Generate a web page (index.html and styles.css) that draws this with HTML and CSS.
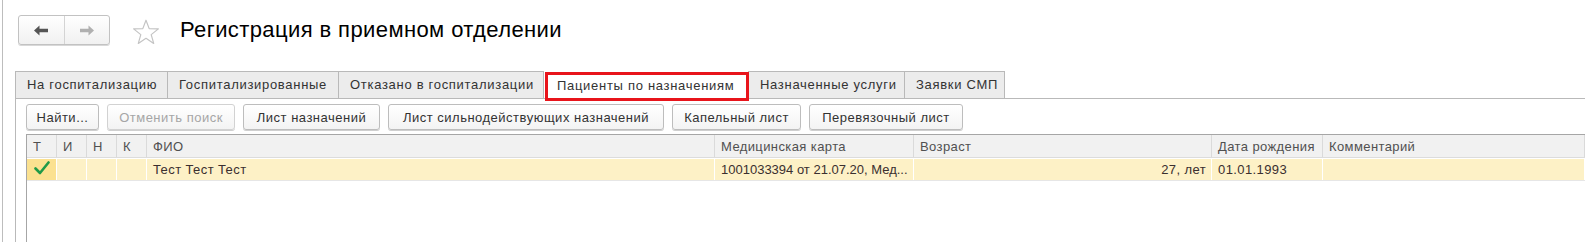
FILE: index.html
```html
<!DOCTYPE html>
<html lang="ru">
<head>
<meta charset="utf-8">
<title>Регистрация в приемном отделении</title>
<link rel="stylesheet" href="styles.css">
</head>
<body>
<div class="window">
  <header class="head">
    <div class="nav">
      <button class="nav-btn back" aria-label="Назад">
        <svg width="14" height="11" viewBox="0 0 14 11"><path d="M0 5.5 L5.5 0.5 L5.5 3.8 L14 3.8 L14 7.2 L5.5 7.2 L5.5 10.5 Z" fill="#555"/></svg>
      </button>
      <button class="nav-btn fwd" aria-label="Вперёд">
        <svg width="14" height="11" viewBox="0 0 14 11"><path d="M14 5.5 L8.5 0.5 L8.5 3.8 L0 3.8 L0 7.2 L8.5 7.2 L8.5 10.5 Z" fill="#b0b0b0"/></svg>
      </button>
    </div>
    <svg class="star" width="28" height="26" viewBox="0 0 28 26"><path d="M14 1.2 L17.2 9.6 L26.4 9.9 L19.2 15.6 L21.7 24.4 L14 19.3 L6.3 24.4 L8.8 15.6 L1.6 9.9 L10.8 9.6 Z" fill="none" stroke="#c4c4c4" stroke-width="1.2" stroke-linejoin="round"/></svg>
    <h1 class="title">Регистрация в приемном отделении</h1>
  </header>

  <section class="tabs">
    <nav class="tabstrip">
      <div class="tab t1">На госпитализацию</div>
      <div class="tab t2">Госпитализированные</div>
      <div class="tab t3">Отказано в госпитализации</div>
      <div class="tab active">Пациенты по назначениям</div>
      <div class="tab t5">Назначенные услуги</div>
      <div class="tab t6">Заявки СМП</div>
    </nav>
    <div class="panel">
      <div class="toolbar">
        <button class="btn b1">Найти...</button>
        <button class="btn b2 disabled">Отменить поиск</button>
        <button class="btn b3">Лист назначений</button>
        <button class="btn b4">Лист сильнодействующих назначений</button>
        <button class="btn b5">Капельный лист</button>
        <button class="btn b6">Перевязочный лист</button>
      </div>
      <div class="grid">
        <div class="row hdr">
          <div class="c">Т</div>
          <div class="c">И</div>
          <div class="c">Н</div>
          <div class="c">К</div>
          <div class="c">ФИО</div>
          <div class="c">Медицинская карта</div>
          <div class="c">Возраст</div>
          <div class="c">Дата рождения</div>
          <div class="c">Комментарий</div>
        </div>
        <div class="row data">
          <div class="c chk"><svg width="16" height="14" viewBox="0 0 16 14"><path d="M1.5 7.5 L6 12 L14.5 1.5" fill="none" stroke="#1f9a48" stroke-width="2.6" stroke-linecap="round" stroke-linejoin="round"/></svg></div>
          <div class="c"></div>
          <div class="c"></div>
          <div class="c"></div>
          <div class="c">Тест Тест Тест</div>
          <div class="c card">1001033394 от 21.07.20, Мед...</div>
          <div class="c num">27, лет</div>
          <div class="c">01.01.1993</div>
          <div class="c"></div>
        </div>
      </div>
    </div>
  </section>
</div>
</body>
</html>
```

FILE: styles.css
```css
* { box-sizing: border-box; }
html, body { margin: 0; padding: 0; background: #fff; }
body {
  font-family: "Liberation Sans", Arial, sans-serif;
  font-size: 13px;
  color: #333;
  width: 1585px;
  height: 242px;
  overflow: hidden;
}
.window {
  margin-left: 2px;
  border-left: 1px solid #bdbdbd;
  height: 242px;
}
.head {
  display: flex;
  align-items: center;
  height: 71px;
  padding: 15px 0 26px 15px;
}
.nav {
  display: flex;
  width: 92px;
  height: 30px;
  border: 1px solid #c2c2c2;
  border-radius: 3px;
  background: linear-gradient(#ffffff, #f1f1f1);
  box-shadow: 0 1px 0 #d8d8d8;
}
.nav-btn {
  flex: 1;
  border: 0;
  background: transparent;
  padding: 0;
  display: flex;
  align-items: center;
  justify-content: center;
}
.nav-btn.back { border-right: 1px solid #d4d4d4; }
.star { margin-left: 22px; margin-top: 3px; }
.title {
  margin: 0 0 0 20px;
  font-weight: normal;
  font-size: 22px;
  letter-spacing: 0.4px;
  color: #000;
  line-height: 26px;
}
.tabs { margin-left: 12px; }
.tabstrip {
  display: flex;
  height: 27px;
  align-items: stretch;
}
.tab {
  border: 1px solid #b9b9b9;
  border-bottom: 0;
  margin-right: -1px;
  background: #ececec;
  padding: 5px 0 0 11px;
  color: #333;
  letter-spacing: 0.7px;
  white-space: nowrap;
}
.t1 { width: 153px; }
.t2 { width: 172px; }
.t3 { width: 206px; }
.t5 { width: 157px; }
.t6 { width: 101px; }
.tab.active {
  width: 204px;
  margin-left: 2px;
  margin-right: -1px;
  margin-top: 1px;
  margin-bottom: -3px;
  height: 29px;
  border: 3px solid #e8141b;
  background: #fff;
  padding: 3px 0 0 9px;
  position: relative;
  z-index: 2;
}
.panel {
  border-top: 1px solid #b9b9b9;
  border-left: 1px solid #b9b9b9;
  padding: 5px 0 0 10px;
  height: 144px;
}
.toolbar {
  display: flex;
  gap: 8px;
  height: 26px;
}
.btn {
  font: inherit;
  letter-spacing: 0.5px;
  color: #333;
  height: 26px;
  padding: 0;
  border: 1px solid #bdbdbd;
  border-radius: 3px;
  background: linear-gradient(#ffffff, #f3f3f3);
  box-shadow: 0 1px 0 #cfcfcf;
}
.btn.disabled { color: #a6a6a6; border-color: #d2d2d2; }
.b1 { width: 73px; }
.b2 { width: 128px; }
.b3 { width: 137px; }
.b4 { width: 276px; }
.b5 { width: 129px; }
.b6 { width: 154px; }
.grid {
  margin-top: 4px;
  border-top: 1px solid #a6a6a6;
  border-left: 1px solid #a6a6a6;
  height: 110px;
}
.row {
  display: grid;
  grid-template-columns: 30px 30px 30px 30px 568px 199px 298px 111px 1fr;
  letter-spacing: 0.4px;
}
.hdr {
  height: 23px;
  background: #f1f1f1;
  border-bottom: 1px solid #dcdcdc;
  color: #505050;
}
.hdr .c { border-right: 1px solid #dadada; padding: 4px 0 0 6px; }
.data {
  height: 22px;
  margin-top: 1px;
  background: #fdf1c6;
  border-bottom: 1px solid #e6e6e6;
  color: #3a2f2f;
}
.data .c { border-right: 1px solid #ffffff; padding: 3px 0 0 6px; }
.data .card { letter-spacing: 0; }
.data .chk { background: #fbe190; padding: 2px 0 0 7px; }
.data .num { text-align: right; padding-right: 5px; }
.c { white-space: nowrap; overflow: hidden; }
```
